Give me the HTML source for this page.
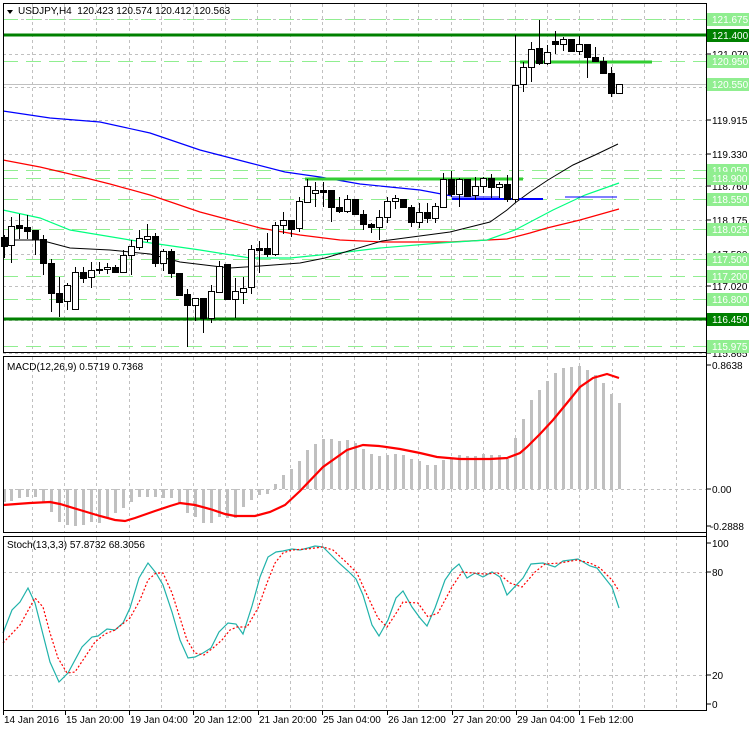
<!DOCTYPE html>
<html><head><meta charset="utf-8">
<style>
html,body{margin:0;padding:0;background:#fff;}
svg{display:block;font-family:"Liberation Sans",sans-serif;}
</style></head>
<body>
<svg id="c" width="749" height="731" xmlns="http://www.w3.org/2000/svg"></svg>
<script>
var s='';
function Y(p){return 35+(121.4-p)*57.37;}
function line(x1,y1,x2,y2,c,w,d){s+='<line x1="'+x1+'" y1="'+y1+'" x2="'+x2+'" y2="'+y2+'" stroke="'+c+'" stroke-width="'+(w||1)+'"'+(d?' stroke-dasharray="'+d+'"':'')+' shape-rendering="crispEdges"/>';}
function poly(pts,c,w,d){s+='<polyline fill="none" points="'+pts.map(function(p){return p.join(',')}).join(' ')+'" stroke="'+c+'" stroke-width="'+(w||1)+'"'+(d?' stroke-dasharray="'+d+'"':'')+'/>';}
function txt(x,y,t,c,sz){s+='<text x="'+x+'" y="'+y+'" font-size="'+(sz||10)+'" fill="'+(c||'#000')+'">'+t+'</text>';}
var gx=[];for(var x=676;x>5;x-=32.2)gx.push(Math.round(x));
// vertical grid
function vgrid(y1,y2){gx.forEach(function(x){line(x+.5,y1,x+.5,y2,'#c0c0c0',1,'3,3');});}
vgrid(4,352);vgrid(357,532);vgrid(537,710);
// horizontal gray grid main
[121.675,121.07,120.485,119.915,119.33,118.76,118.175,117.59,117.02,116.435,115.865].forEach(function(p){line(3,Math.round(Y(p))+.5,706,Math.round(Y(p))+.5,'#c0c0c0',1,'3,3');});
// green dashed levels
[121.675,120.95,119.05,118.9,118.55,118.025,117.5,117.2,116.8,115.975].forEach(function(p){line(3,Math.round(Y(p))+.5,706,Math.round(Y(p))+.5,'#90ee90',1,'15,8');});
line(3,84.5,706,84.5,'#c0c0c0',1);
line(3,35,706,35,'#008000',3);line(3,319,706,319,'#008000',3);
// MAs
poly([[3,111],[50,118],[100,122],[150,133],[200,150],[250,163],[285,172],[320,177],[360,184],[420,190],[452,196]],'#0000ff',1.2);
poly([[3,160],[40,167],[70,174],[110,184],[150,195],[200,212],[230,220],[260,228],[300,235],[340,240],[383,242],[450,242],[507,239],[530,233],[547,228],[580,220],[619,209]],'#ff0000',1.2);
poly([[3,210],[40,218],[70,230],[130,240],[200,250],[250,258],[290,258],[330,254],[380,248],[440,243],[487,240],[515,230],[553,210],[585,195],[619,183]],'#00ff7f',1.2);
poly([[3,240],[40,240],[70,248],[110,250],[150,254],[180,262],[230,268],[260,266],[300,263],[325,258],[382,241],[450,232],[490,222],[507,210],[515,203],[530,192],[548,180],[573,165],[595,155],[618,144]],'#000',1);
// level segments
line(305,179,523,179,'#32cd32',3);line(520,62,652,62,'#32cd32',3);
line(452,199,543,199,'#0000ff',2);line(452,197,500,197,'#0000ff',1);line(565,197,617,197,'#0000ff',1.2);
// candles x,hi,lo,top,bot,bear
var C=[[4,235,258,237,246,1],[11,217,263,226,245,0],[19,214,239,225,228,1],[27,215,239,227,231,1],[35,230,255,230,239,1],[43,235,275,239,263,1],[51,259,312,263,293,1],[59,277,317,293,302,1],[67,283,310,285,301,0],[75,267,309,272,309,0],[83,267,283,272,278,1],[91,262,288,270,277,0],[99,262,274,269,270,1],[107,263,274,267,269,0],[115,265,273,267,272,1],[123,250,273,255,272,0],[131,240,275,246,255,0],[139,230,250,238,247,0],[147,224,242,236,239,0],[155,233,267,236,263,1],[163,249,271,251,263,0],[171,249,278,251,273,1],[179,273,295,273,295,1],[187,289,347,294,305,1],[195,298,321,298,305,0],[203,298,333,298,318,1],[211,285,323,291,318,0],[219,261,293,266,292,0],[227,264,299,264,299,1],[235,278,318,291,299,0],[243,277,304,288,292,0],[251,245,294,249,287,0],[259,241,273,248,250,1],[267,233,257,248,254,1],[275,222,256,225,254,0],[283,212,234,220,225,0],[291,220,237,220,229,1],[299,197,232,201,228,0],[307,179,203,186,202,0],[315,182,207,190,193,0],
[323,182,207,190,192,1],[331,190,222,190,207,1],[339,197,213,207,211,1],[347,195,213,199,211,0],[355,199,213,199,214,1],[363,210,230,214,224,1],[371,223,233,224,227,1],[379,210,240,217,227,0],[387,197,223,201,217,0],[395,195,209,198,201,0],[403,199,207,199,207,1],[411,205,227,207,222,1],[419,203,228,212,222,0],[427,203,223,212,218,1],[435,203,223,206,218,0],[443,173,207,179,207,0],[451,171,197,179,194,1],[459,178,207,179,194,0],[467,179,196,179,196,1],[475,177,200,186,195,0],[483,177,193,178,186,0],[491,174,198,178,187,1],[499,182,198,184,187,0],[507,175,202,184,199,1],[515,35,203,85,199,0],[523,62,92,67,84,0],[531,42,82,49,67,0],[539,20,65,48,63,1],[547,45,65,52,63,0],[555,31,54,41,44,1],[563,37,51,39,44,0],[571,39,51,39,51,1],[579,36,55,44,51,0],[587,44,78,44,57,1],[595,47,61,57,61,1],[603,57,74,61,73,1],[611,67,97,73,93,1],[619,84,93,84,93,0]];
C.forEach(function(c){line(c[0]+.5,c[1],c[0]+.5,c[2],'#000',1);var h=Math.max(c[4]-c[3],1);s+='<rect x="'+(c[0]-2.5)+'" y="'+(c[3]+.5)+'" width="6" height="'+h+'" fill="'+(c[5]?'#000':'#fff')+'" stroke="#000" stroke-width="1"/>';});
// MACD
line(3,489.5,706,489.5,'#c0c0c0',1,'3,3');
var M=[[4,502],[11,501],[19,498],[27,497],[35,497],[43,502],[51,512],[59,522],[67,525],[75,526],[83,525],[91,522],[99,523],[107,518],[115,513],[123,508],[131,502],[139,497],[147,497],[155,497],[163,498],[171,498],[179,503],[187,513],[195,517],[203,523],[211,523],[219,517],[227,518],[235,518],[243,507],[251,500],[259,495],[267,494],[275,484],[283,475],[291,469],[299,461],[307,450],[315,444],[323,439],[331,439],[339,441],[347,440],[355,443],[363,449],[371,454],[379,456],[387,455],[395,454],[403,455],[411,459],[419,461],[427,465],[435,465],[443,460],[451,459],[459,455],[467,456],[475,456],[483,454],[491,455],[499,455],[507,459],[515,438],[523,419],[531,400],[539,390],[547,381],[555,373],[563,368],[571,367],[579,366],[587,370],[595,375],[603,383],[611,394],[619,403]];
M.forEach(function(m){var a=Math.min(m[1],489),b=Math.max(m[1],489);s+='<rect x="'+(m[0]-1)+'" y="'+a+'" width="3" height="'+(b-a)+'" fill="#c0c0c0"/>';});
poly([[3,505],[30,503],[50,502],[60,504],[80,510],[100,516],[115,520],[125,521],[135,518],[155,511],[170,506],[180,503],[195,505],[210,509],[225,514],[235,516],[255,516],[270,512],[285,505],[300,491],[323,467],[347,450],[363,445],[379,446],[400,449],[420,453],[437,457],[460,459],[490,459],[507,458],[520,453],[527,447],[540,434],[553,420],[567,403],[580,387],[593,378],[607,374],[619,378]],'#ff0000',2.2);
// Stoch
line(3,572.5,706,572.5,'#c0c0c0',1,'3,3');line(3,675.5,706,675.5,'#c0c0c0',1,'3,3');
poly([[3,633],[12,610],[20,602],[28,588],[35,603],[50,662],[59,682],[68,673],[82,647],[92,637],[98,636],[107,629],[115,630],[123,623],[130,608],[139,578],[148,563],[156,573],[163,585],[172,612],[180,640],[188,658],[195,657],[203,653],[211,648],[219,632],[228,623],[236,624],[243,634],[252,606],[260,577],[268,557],[276,552],[283,551],[292,549],[300,550],[308,548],[315,546],[323,547],[331,555],[339,563],[348,571],[356,579],[363,595],[372,625],[379,636],[388,620],[396,598],[403,591],[412,607],[420,618],[427,626],[435,608],[445,580],[452,570],[459,564],[467,578],[475,573],[483,577],[492,572],[500,577],[507,595],[523,578],[531,564],[543,563],[555,567],[563,561],[578,559],[590,566],[597,568],[612,587],[619,608]],'#20b2aa',1.2);
poly([[3,643],[20,625],[35,598],[43,607],[50,633],[58,658],[67,673],[75,672],[85,657],[95,642],[105,634],[115,630],[130,618],[140,600],[148,580],[156,573],[163,573],[172,593],[180,618],[187,640],[195,653],[204,655],[213,648],[222,640],[230,630],[237,627],[247,627],[258,608],[267,583],[275,563],[283,553],[292,550],[307,549],[323,547],[333,550],[347,563],[357,573],[367,595],[378,618],[387,627],[395,615],[403,602],[418,603],[428,617],[438,613],[452,587],[462,572],[473,573],[485,574],[498,573],[510,583],[522,587],[535,572],[545,564],[560,563],[577,560],[590,563],[600,568],[612,580],[619,591]],'#ff0000',1.2,'2,2');
// borders
function box(y1,y2){s+='<rect x="3.5" y="'+y1+'.5" width="703" height="'+(y2-y1)+'" fill="none" stroke="#000" stroke-width="1"/>';}
box(3,352);box(356,532);box(536,710);
line(706.5,3,706.5,711,'#000',1);
// right axis
function tick(y){line(707,y,711,y,'#000',1);}
[121.07,120.485,119.915,119.33,118.76,118.175,117.59,117.02,115.865].forEach(function(p){var y=Math.round(Y(p));tick(y);txt(712,y+4,p.toFixed(3));});
function lab(p,bg){var y=Math.round(Y(p));s+='<rect x="707" y="'+(y-6)+'" width="42" height="13" fill="'+bg+'"/>';txt(712,y+4,p.toFixed(3),'#fff');}
[121.675,120.95,120.55,119.05,118.9,118.55,118.025,117.5,117.2,116.8,115.975].forEach(function(p){lab(p,'#90ee90');});
lab(121.4,'#008000');lab(116.45,'#008000');
tick(365);txt(712,369,'0.8638');tick(489);txt(712,493,'0.00');tick(526);txt(710,530,'-0.2888');
tick(543);txt(712,547,'100');tick(572);txt(712,576,'80');tick(675);txt(712,679,'20');tick(704);txt(712,708,'0');
// title labels
s+='<path d="M7 10 L13 10 L10 14 Z" fill="#000"/>';
txt(18,14,'USDJPY,H4&#160; 120.423 120.574 120.412 120.563','#000',10);
txt(7,370,'MACD(12,26,9) 0.5719 0.7368','#000',10);
txt(7,548,'Stoch(13,3,3) 57.8732 68.3056','#000',10);
// date axis
var D=['14 Jan 2016','15 Jan 20:00','19 Jan 04:00','20 Jan 12:00','21 Jan 20:00','25 Jan 04:00','26 Jan 12:00','27 Jan 20:00','29 Jan 04:00','1 Feb 12:00'];
var dx=[3,65,129,193,258,322,387,452,516,579];
D.forEach(function(d,i){line(dx[i]+.5,711,dx[i]+.5,715,'#000',1);txt(dx[i]+1,723,d);});
document.getElementById('c').innerHTML=s;
</script>
</body></html>
